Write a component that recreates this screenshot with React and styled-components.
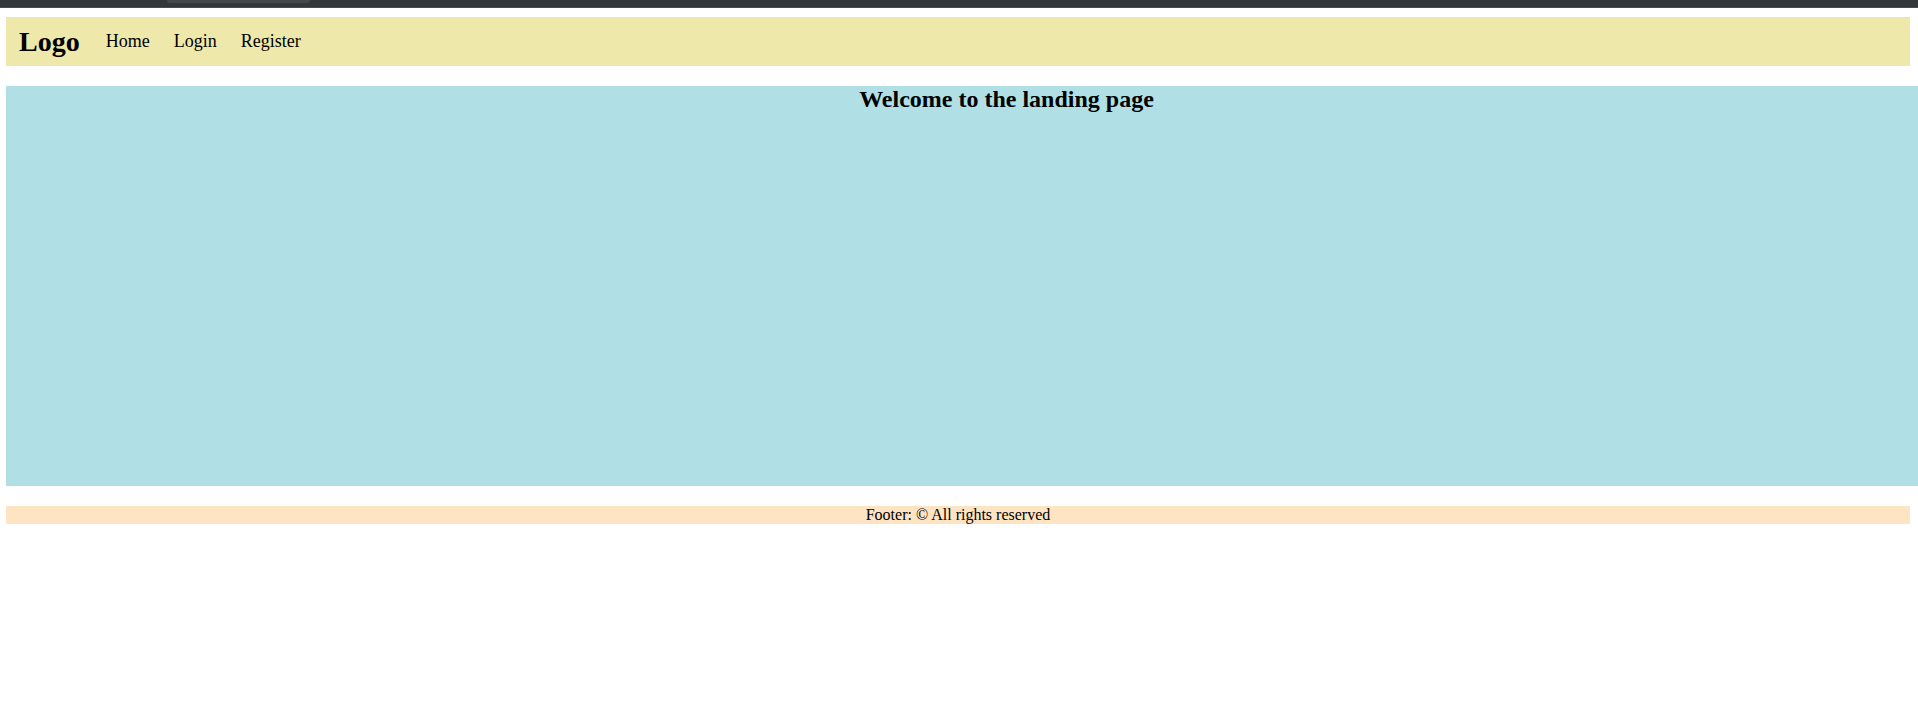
import React from 'react';
import styled, { createGlobalStyle } from 'styled-components';

function App() {
  return (
    <>
      <GlobalStyle />
      <ChromeStrip>
        <ChromeTab />
      </ChromeStrip>
      <Page>
        <Header>
          <Logo>Logo</Logo>
          <Nav>
            <NavLink href="#">Home</NavLink>
            <NavLink href="#">Login</NavLink>
            <NavLink href="#">Register</NavLink>
          </Nav>
        </Header>
        <Main>
          <Title>Welcome to the landing page</Title>
        </Main>
        <Footer>Footer: © All rights reserved</Footer>
      </Page>
    </>
  );
}

const GlobalStyle = createGlobalStyle`
  html, body {
    margin: 0;
    padding: 0;
    background: #ffffff;
    overflow: hidden;
  }
  body {
    font-family: 'Liberation Serif', 'Times New Roman', serif;
    font-size: 16px;
    color: #000000;
  }
`;

const ChromeStrip = styled.div`
  height: 7px;
  background-color: #35363a;
  border-bottom: 1px solid #4a4b4f;
`;

const ChromeTab = styled.div`
  margin-left: 167px;
  width: 143px;
  height: 3px;
  background-color: #47484c;
  border-radius: 0 0 8px 8px;
`;

const Page = styled.div`
  display: flex;
  flex-direction: column;
  gap: 20px;
  padding: 9px 8px 0 6px;
`;

const Header = styled.header`
  display: flex;
  align-items: center;
  height: 49px;
  padding-left: 13px;
  background-color: #eee8aa;
`;

const Logo = styled.h2`
  margin: 0 26px 0 0;
  font-size: 28px;
  font-weight: bold;
`;

const Nav = styled.nav`
  display: flex;
  gap: 24px;
`;

const NavLink = styled.a`
  font-size: 18px;
  color: #000000;
  text-decoration: none;
`;

const Main = styled.main`
  width: 2001px;
  height: 400px;
  background-color: #b0e0e6;
`;

const Title = styled.h2`
  margin: 0;
  font-size: 24px;
  font-weight: bold;
  text-align: center;
`;

const Footer = styled.footer`
  height: 18px;
  line-height: 18px;
  background-color: #ffe4c4;
  text-align: center;
  font-size: 16px;
`;

export default App;
